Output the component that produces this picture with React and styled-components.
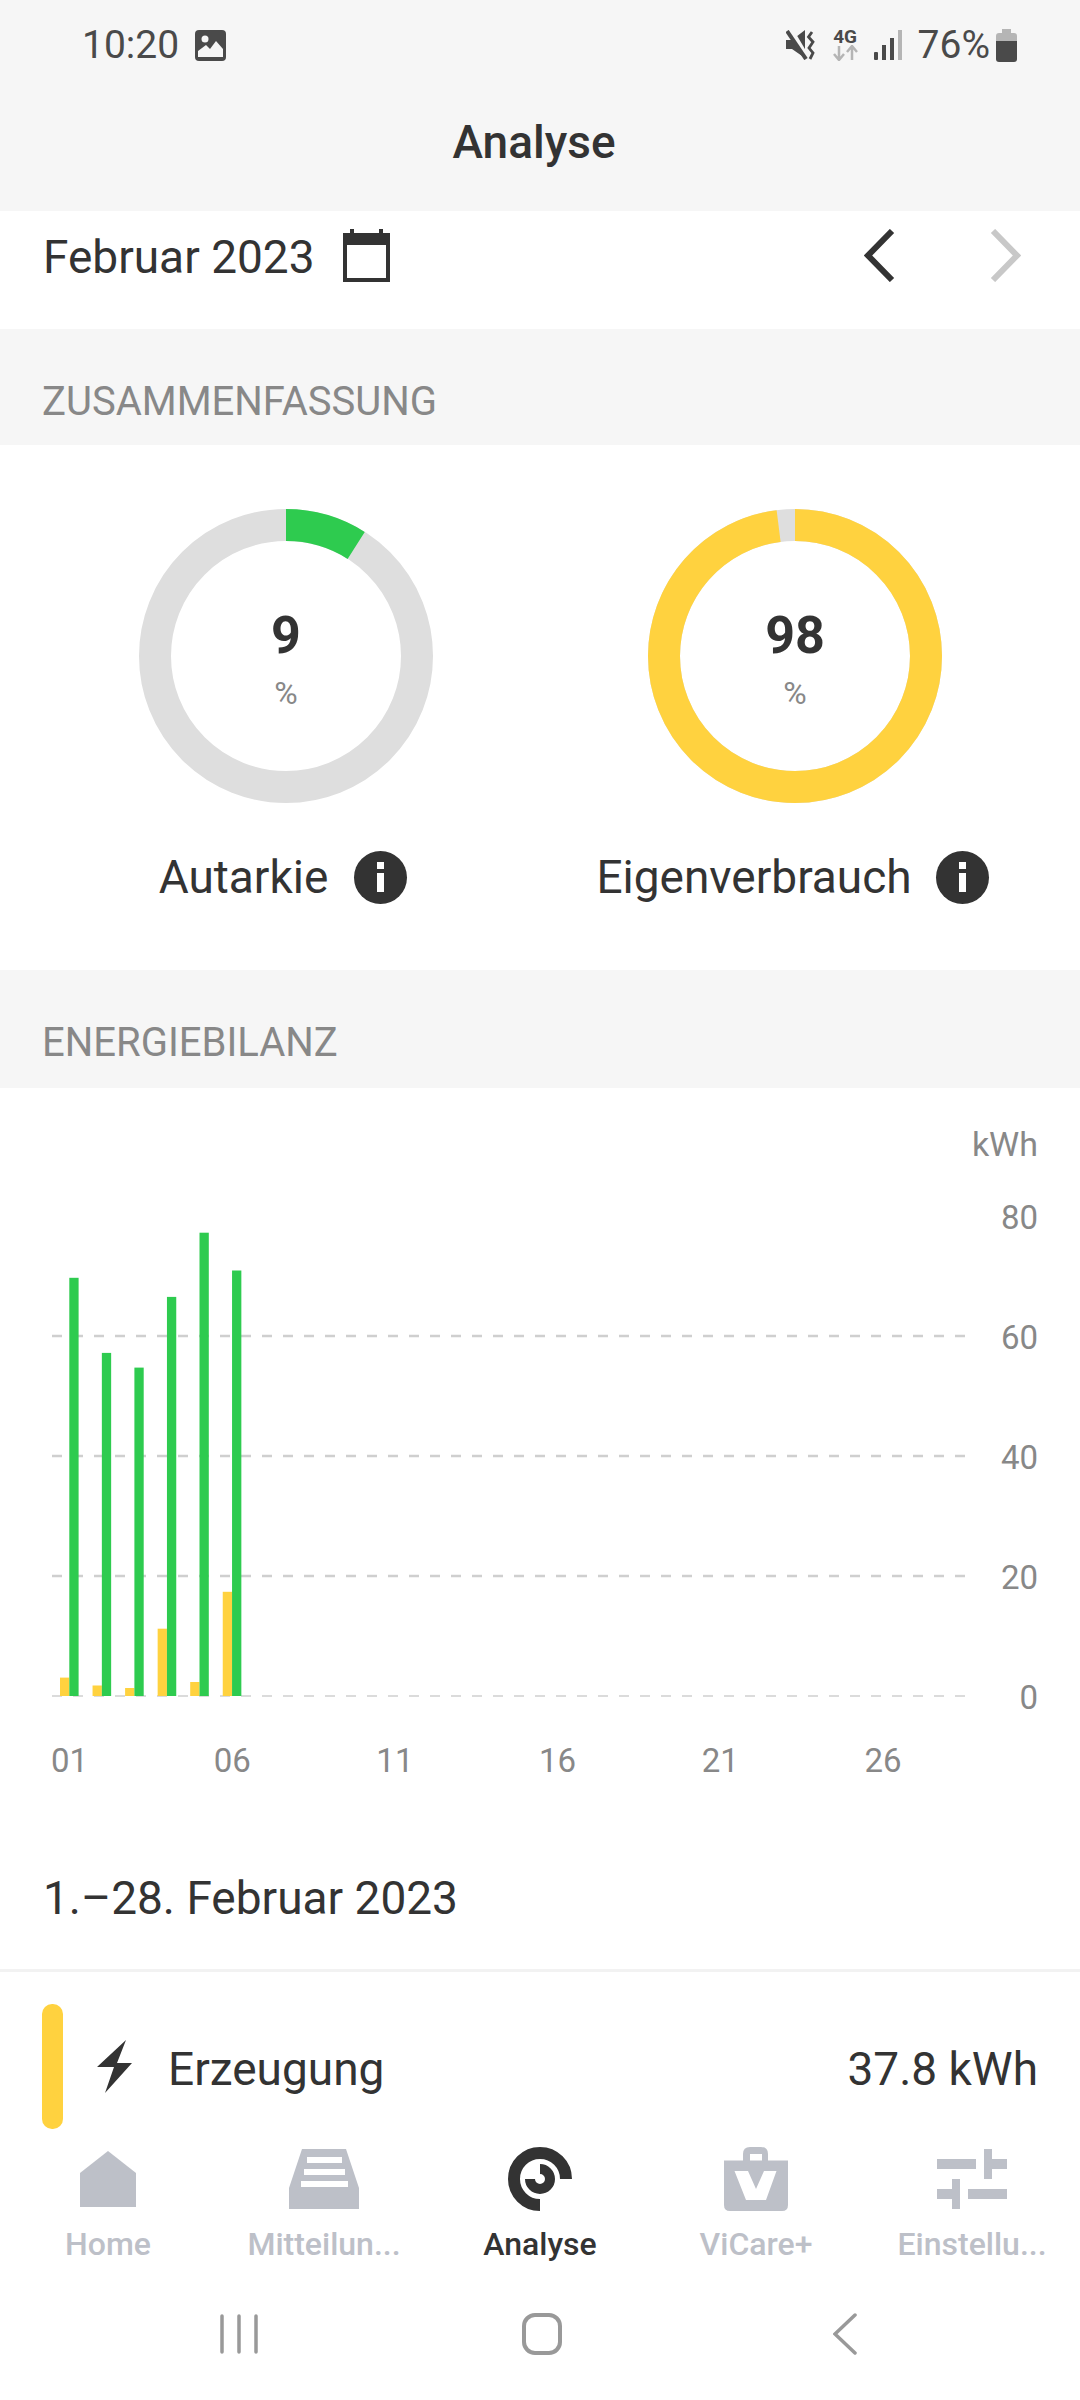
import React from "react";
import styled, { createGlobalStyle } from "styled-components";

const GlobalStyle = createGlobalStyle`
  html, body {
    margin: 0;
    padding: 0;
    background: #fff;
  }
  * {
    box-sizing: border-box;
  }
`;

const Screen = styled.div`
  width: 1080px;
  height: 2400px;
  display: flex;
  flex-direction: column;
  overflow: hidden;
  background: #fff;
  color: #333;
  font-family: Roboto, "Liberation Sans", sans-serif;
`;

const TopArea = styled.header`
  height: 211px;
  background: #f6f6f6;
  display: flex;
  flex-direction: column;
`;

const StatusBar = styled.div`
  height: 90px;
  padding: 0 63px 0 82px;
  display: flex;
  align-items: center;
  justify-content: space-between;
  color: #4a4a4a;
  font-size: 39px;
`;

const StatusGroup = styled.div`
  display: flex;
  align-items: center;
  gap: ${(p) => p.$gap || 16}px;
`;

const Network = styled.div`
  width: 25px;
  display: flex;
  flex-direction: column;
  align-items: center;
  font-size: 19px;
  line-height: 16px;
  font-weight: 700;
`;

const Title = styled.h1`
  margin: 26px 0 0;
  padding-right: 12px;
  text-align: center;
  font-size: 46px;
  line-height: 52px;
  font-weight: 500;
  color: #333;
`;

const Content = styled.main`
  flex: 1;
  min-height: 0;
  overflow: hidden;
`;

const DateRow = styled.div`
  height: 118px;
  padding: 0 59px 26px 43px;
  display: flex;
  align-items: center;
`;

const DateLabel = styled.span`
  font-size: 46px;
  margin-right: 28px;
`;

const CalendarIcon = styled.svg`
  margin-bottom: 3px;
`;

const Pager = styled.div`
  margin-left: auto;
  margin-bottom: 3px;
  display: flex;
  gap: 95px;
`;

const SectionHead = styled.div`
  height: ${(p) => p.$height}px;
  padding: 50px 42px 0;
  background: #f6f6f6;
  color: #888;
  font-size: 40px;
  line-height: 46px;
`;

const Summary = styled.section`
  height: 525px;
  padding: 64px 0 0 32px;
  display: grid;
  grid-template-columns: 508px 510px;
`;

const Gauge = styled.div`
  display: flex;
  flex-direction: column;
  align-items: center;
`;

const RingWrap = styled.div`
  position: relative;
  width: 294px;
  height: 294px;
`;

const RingText = styled.div`
  position: absolute;
  inset: 0;
  padding-top: 97px;
  display: flex;
  flex-direction: column;
  align-items: center;
`;

const RingValue = styled.div`
  font-size: 52px;
  line-height: 60px;
  font-weight: 700;
`;

const RingUnit = styled.div`
  margin-top: 7px;
  font-size: 32px;
  line-height: 40px;
  color: #888;
`;

const GaugeLabel = styled.div`
  margin-top: 48px;
  margin-right: ${(p) => p.$nudge}px;
  height: 52px;
  display: flex;
  align-items: center;
  gap: ${(p) => p.$gap}px;
  font-size: 46px;
`;

const InfoDot = styled.span`
  width: 53px;
  height: 53px;
  border-radius: 50%;
  background: #333;
  display: flex;
  flex-direction: column;
  align-items: center;
  justify-content: center;
  gap: 4px;

  &::before {
    content: "";
    width: 7px;
    height: 7px;
    background: #fff;
  }
  &::after {
    content: "";
    width: 7px;
    height: 19px;
    background: #fff;
  }
`;

const ChartSvg = styled.svg`
  display: block;
`;

const AxisText = styled.text`
  font-family: Roboto, "Liberation Sans", sans-serif;
  font-size: 33px;
  fill: #888;
`;

const UnitText = styled(AxisText)`
  font-size: 34px;
`;

const PeriodRow = styled.div`
  height: 145px;
  padding: 0 43px;
  border-bottom: 3px solid #f2f2f2;
  display: flex;
  align-items: center;
  font-size: 46px;
`;

const LegendRow = styled.div`
  height: 160px;
  padding: 32px 42px 0;
  display: flex;
  align-items: flex-start;
`;

const LegendBar = styled.div`
  width: 21px;
  height: 125px;
  border-radius: 10px;
  background: #ffd23f;
  margin-right: 33px;
`;

const LegendBody = styled.div`
  flex: 1;
  height: 125px;
  display: flex;
  align-items: center;
  font-size: 46px;
`;

const LegendName = styled.span`
  margin-left: 36px;
  padding-top: 4px;
`;

const LegendValue = styled.span`
  margin-left: auto;
  padding-top: 4px;
`;

const TabBar = styled.nav`
  height: 136px;
  padding-top: 15px;
  display: grid;
  grid-template-columns: repeat(5, 1fr);
  background: #fff;
`;

const Tab = styled.div`
  display: flex;
  flex-direction: column;
  align-items: center;
  color: ${(p) => (p.$active ? "#333" : "#bdc0c8")};
`;

const TabIcon = styled.div`
  height: 64px;
  display: flex;
  align-items: center;
  justify-content: center;
`;

const TabLabel = styled.div`
  margin-top: 15px;
  font-size: 32px;
  line-height: 36px;
  font-weight: 500;
  white-space: nowrap;
`;

const NavBar = styled.div`
  height: 132px;
  padding-left: 220px;
  display: grid;
  grid-template-columns: 302px 311px 1fr;
  align-items: center;
  background: #fff;
`;

const bars = [
  { y: 18.4, g: 418.2 },
  { y: 10.5, g: 343.1 },
  { y: 8, g: 328.4 },
  { y: 67.3, g: 399.1 },
  { y: 14, g: 463.3 },
  { y: 104.2, g: 425.5 },
];

const Ring = ({ value, color, label, nudge, gap }) => (
  <Gauge>
    <RingWrap>
      <svg width="294" height="294" viewBox="0 0 294 294">
        <circle cx="147" cy="147" r="131" fill="none" stroke="#dedede" strokeWidth="32" />
        <circle
          cx="147"
          cy="147"
          r="131"
          fill="none"
          stroke={color}
          strokeWidth="32"
          pathLength="100"
          strokeDasharray={`${value} 100`}
          transform="rotate(-90 147 147)"
        />
      </svg>
      <RingText>
        <RingValue>{value}</RingValue>
        <RingUnit>%</RingUnit>
      </RingText>
    </RingWrap>
    <GaugeLabel $nudge={nudge} $gap={gap}>
      {label}
      <InfoDot />
    </GaugeLabel>
  </Gauge>
);

const Chart = () => {
  const base = 608;
  return (
    <ChartSvg width="1080" height="739" viewBox="0 0 1080 739">
      <UnitText x="1038" y="68" textAnchor="end">kWh</UnitText>
      {[
        ["80", 128],
        ["60", 248],
        ["40", 368],
        ["20", 488],
        ["0", 608],
      ].map(([t, y]) => (
        <g key={t}>
          {t !== "80" && (
            <line
              x1="52"
              x2="966"
              y1={y}
              y2={y}
              stroke="#cfcfcf"
              strokeWidth={t === "0" ? 1.5 : 2.5}
              strokeDasharray="10 11"
            />
          )}
          <AxisText x="1038" y={y + 13} textAnchor="end">{t}</AxisText>
        </g>
      ))}
      {bars.map((b, i) => {
        const x = 60 + i * 32.55;
        return (
          <g key={i}>
            <rect x={x} y={base - b.y} width="9.3" height={b.y} fill="#ffd23f" />
            <rect x={x + 9.3} y={base - b.g} width="9.3" height={b.g} fill="#2ecb4f" />
          </g>
        );
      })}
      {["01", "06", "11", "16", "21", "26"].map((t, i) => (
        <AxisText key={t} x={69.5 + i * 162.7} y="684" textAnchor="middle">{t}</AxisText>
      ))}
    </ChartSvg>
  );
};

const HomeIcon = () => (
  <svg width="56" height="56" viewBox="0 0 56 56">
    <path d="M28 0 56 22V56H0V22Z" fill="#bdc0c8" />
  </svg>
);

const InboxIcon = () => (
  <svg width="70" height="60" viewBox="0 0 70 60">
    <path
      fillRule="evenodd"
      fill="#bdc0c8"
      d="M13 0H57L70 39V60H0V39ZM18 8V14H53V8ZM15 20V26H56V20ZM12 32V38H59V32Z"
    />
  </svg>
);

const AnalyseIcon = () => (
  <svg width="64" height="64" viewBox="0 0 64 64" fill="none" stroke="#333">
    <path d="M58 32A26 26 0 1 0 32 58" strokeWidth="12" />
    <path d="M32 22A10 10 0 1 1 22 32" strokeWidth="10" />
  </svg>
);

const BagIcon = () => (
  <svg width="64" height="64" viewBox="0 0 64 64">
    <path
      fillRule="evenodd"
      fill="#bdc0c8"
      d="M0 13.5H19V7Q19 0 26 0H37Q44 0 44 7V13.5H64V58Q64 64 58 64H6Q0 64 0 58ZM26 7V13.5H38V7ZM10.5 24 22 53H42L52.5 24H40L32 42 24 24Z"
    />
  </svg>
);

const SlidersIcon = () => (
  <svg width="70" height="60" viewBox="0 0 70 60" fill="#bdc0c8">
    <rect x="0" y="10" width="39" height="10" />
    <rect x="47" y="0" width="8" height="30" />
    <rect x="55" y="10" width="15" height="10" />
    <rect x="0" y="40" width="15" height="10" />
    <rect x="15" y="30" width="8" height="30" />
    <rect x="31" y="40" width="39" height="10" />
  </svg>
);

const tabs = [
  { label: "Home", icon: <HomeIcon /> },
  { label: "Mitteilun...", icon: <InboxIcon /> },
  { label: "Analyse", icon: <AnalyseIcon />, active: true },
  { label: "ViCare+", icon: <BagIcon /> },
  { label: "Einstellu...", icon: <SlidersIcon /> },
];

export default function App() {
  return (
    <Screen>
      <GlobalStyle />
      <TopArea>
        <StatusBar>
          <StatusGroup>
            10:20
            <svg width="31" height="31" viewBox="0 0 31 31">
              <rect width="31" height="31" rx="4" fill="#4a4a4a" />
              <circle cx="10" cy="9" r="3.5" fill="#f6f6f6" />
              <path d="M3 27V21L11 15 15 19 21 11 28 19V27Z" fill="#f6f6f6" />
            </svg>
          </StatusGroup>
          <StatusGroup $gap={6}>
            <StatusGroup>
              <svg width="31" height="30" viewBox="0 0 31 30" fill="none">
                <path d="M0 10H6L19 0V28L6 19H0Z" fill="#4a4a4a" />
                <path d="M3 -2 22 30" stroke="#f6f6f6" strokeWidth="6" />
                <path d="M1 1 20 29" stroke="#4a4a4a" strokeWidth="4" />
                <path
                  d="M26 2 22.5 7 27 12 23 18 27 23 24 29"
                  stroke="#4a4a4a"
                  strokeWidth="2.8"
                />
              </svg>
              <Network>
                4G
                <svg width="25" height="16" viewBox="0 0 25 16" fill="none">
                  <path d="M6 1V15M1 9 6 15 11 9" stroke="#b5b5b5" strokeWidth="2.5" />
                  <path d="M19 15V1M14 7 19 1 24 7" stroke="#b5b5b5" strokeWidth="2.5" />
                </svg>
              </Network>
              <svg width="28" height="30" viewBox="0 0 28 30">
                <rect x="0" y="22" width="4" height="8" rx="1" fill="#4a4a4a" />
                <rect x="8" y="15" width="4" height="15" fill="#4a4a4a" />
                <rect x="16" y="8" width="4" height="22" fill="#4a4a4a" />
                <rect x="24" y="0" width="4" height="30" fill="#b5b5b5" />
              </svg>
              <span>76%</span>
            </StatusGroup>
            <svg width="21" height="33" viewBox="0 0 21 33">
              <path d="M6 0H15V4H18Q21 4 21 7V12H0V7Q0 4 3 4H6Z" fill="#b5b5b5" />
              <path d="M0 12H21V30Q21 33 18 33H3Q0 33 0 30Z" fill="#4a4a4a" />
            </svg>
          </StatusGroup>
        </StatusBar>
        <Title>Analyse</Title>
      </TopArea>
      <Content>
        <DateRow>
          <DateLabel>Februar 2023</DateLabel>
          <CalendarIcon width="47" height="53" viewBox="0 0 47 53" fill="none">
            <rect x="7" y="0" width="4" height="8" fill="#333" />
            <rect x="36" y="0" width="4" height="8" fill="#333" />
            <path d="M0 5H47V16H0Z" fill="#333" />
            <rect x="2" y="6" width="43" height="45" stroke="#333" strokeWidth="4" />
          </CalendarIcon>
          <Pager>
            <svg width="31" height="53" viewBox="0 0 31 53" fill="none">
              <path d="M28 2 4 26.5 28 51" stroke="#333" strokeWidth="6" />
            </svg>
            <svg width="31" height="53" viewBox="0 0 31 53" fill="none">
              <path d="M3 2 27 26.5 3 51" stroke="#c8c8c8" strokeWidth="6" />
            </svg>
          </Pager>
        </DateRow>
        <SectionHead $height={116}>ZUSAMMENFASSUNG</SectionHead>
        <Summary>
          <Ring value={9} color="#2ecb4f" label="Autarkie" nudge={6} gap={26} />
          <Ring value={98} color="#ffd23f" label="Eigenverbrauch" nudge={5} gap={24} />
        </Summary>
        <SectionHead $height={118}>ENERGIEBILANZ</SectionHead>
        <Chart />
        <PeriodRow>1.–28. Februar 2023</PeriodRow>
        <LegendRow>
          <LegendBar />
          <LegendBody>
            <svg width="36" height="53" viewBox="0 0 36 53">
              <path d="M30 0 1 27H18L9 53 36 23H21Z" fill="#333" />
            </svg>
            <LegendName>Erzeugung</LegendName>
            <LegendValue>37.8 kWh</LegendValue>
          </LegendBody>
        </LegendRow>
      </Content>
      <TabBar>
        {tabs.map((t) => (
          <Tab key={t.label} $active={t.active}>
            <TabIcon>{t.icon}</TabIcon>
            <TabLabel>{t.label}</TabLabel>
          </Tab>
        ))}
      </TabBar>
      <NavBar>
        <svg width="40" height="40" viewBox="0 0 40 40" stroke="#999" strokeWidth="3.5" strokeLinecap="round">
          <path d="M2 2V38M19 2V38M36 2V38" />
        </svg>
        <svg width="40" height="42" viewBox="0 0 40 42" fill="none" stroke="#999" strokeWidth="4">
          <rect x="2" y="2" width="36" height="38" rx="11" />
        </svg>
        <svg width="24" height="42" viewBox="0 0 24 42" fill="none" stroke="#999" strokeWidth="3.5" strokeLinecap="round">
          <path d="M22 2 2 21 22 40" />
        </svg>
      </NavBar>
    </Screen>
  );
}
